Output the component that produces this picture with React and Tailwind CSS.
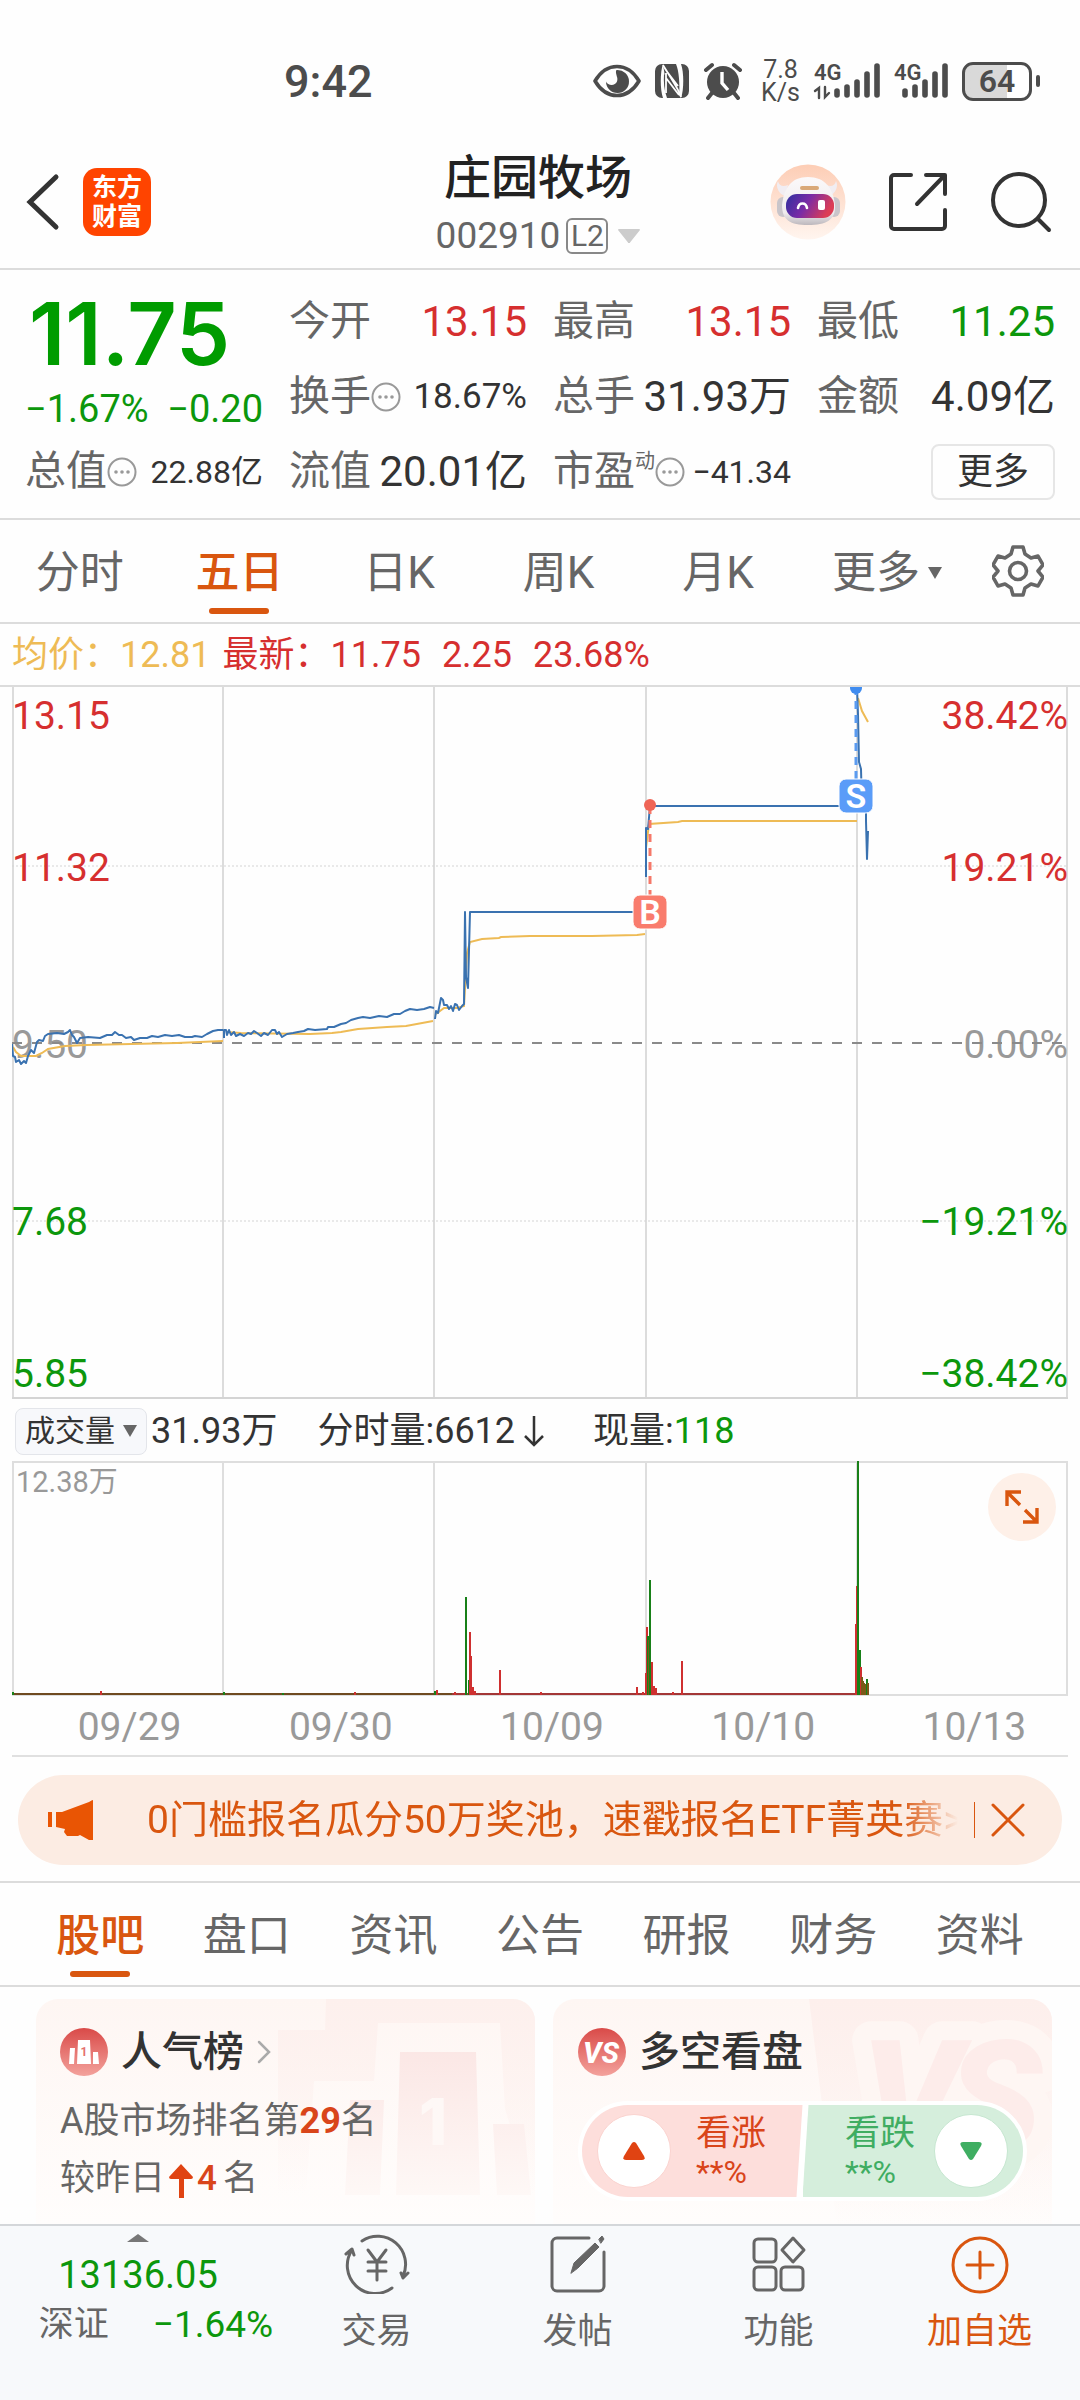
import { useState } from 'react'

const CHART_TABS = ['分时', '五日', '日K', '周K', '月K']
const SECTION_TABS = ['股吧', '盘口', '资讯', '公告', '研报', '财务', '资料']
const DATES = ['09/29', '09/30', '10/09', '10/10', '10/13']

const RED = '#d62f2f'
const GREEN = '#0c970c'

const PRICE_LABELS = [
  { y: 42, price: '13.15', change: '38.42%', color: RED },
  { y: 194, price: '11.32', change: '19.21%', color: RED },
  { y: 371, price: '9.50', change: '0.00%', color: '#999999' },
  { y: 548, price: '7.68', change: '−19.21%', color: GREEN },
  { y: 700, price: '5.85', change: '−38.42%', color: GREEN }
]

// one polyline per trading day
const PRICE_LINES = [
  '0,357 1,369 3,370 4,375 7,373 9,377 12,374 14,376 16,369 19,363 22,366 25,355 27,353 31,354 33,349 36,347 45,346 52,347 56,345 58,343 60,348 62,350 65,356 68,351 76,350 88,351 95,348 100,348 103,345 107,348 110,348 114,351 119,350 122,353 128,351 135,351 140,349 146,350 153,348 160,349 167,348 173,350 180,350 183,349 190,350 195,347 201,344 206,343 211,343',
  '212,351 212,343 214,343 215,348 217,343 219,348 222,345 224,349 228,347 232,349 236,346 239,347 242,344 245,346 249,349 252,346 256,348 260,343 263,343 265,347 267,345 270,350 275,347 281,346 286,345 292,344 296,342 303,343 315,342 316,340 322,340 329,337 334,336 339,333 346,331 351,330 358,331 367,329 375,330 382,327 388,327 393,324 398,322 405,323 412,322 418,320 422,321',
  '423,332 424,324 426,326 429,311 431,313 432,318 435,318 437,322 439,319 441,324 443,317 445,318 447,323 450,319 452,317 453,225 454,290 456,301 458,225 634,225',
  '634,190 634,141 636,142 638,119 845,119',
  '845,0 846,27 847,75 849,82 850,120 853,124 854,97 854,134 855,172 856,144'
]

const AVERAGE_LINES = [
  '1,360 4,365 9,369 24,369 30,366 36,362 53,359 74,358 119,357 165,356 211,354',
  '214,345 229,346 298,347 320,346 329,345 346,342 375,340 394,339 421,334',
  '424,327 432,321 445,321 452,319 455,266 458,255 470,252 487,251 489,250 518,249 580,249 625,248 633,247',
  '634,161 637,137 666,135 670,134 845,134',
  '846,11 850,24 856,35'
]

const VOLUME_BARS = [
  [0, 231, 'g'], [88, 230, 'r'], [211, 231, 'g'], [270, 232, 'g'], [342, 231, 'r'],
  [422, 230, 'g'], [424, 229, 'r'], [442, 231, 'r'],
  [453, 207, 'b'], [453, 136, 'g'], [456, 219, 'g'], [457, 171, 'r'], [458, 195, 'r'],
  [460, 226, 'r'], [462, 230, 'r'], [487, 209, 'r'], [528, 231, 'r'],
  [624, 226, 'r'], [630, 231, 'r'], [633, 212, 'r'], [634, 166, 'r'], [635, 175, 'g'],
  [636, 179, 'b'], [639, 201, 'r'], [637, 119, 'g'], [641, 225, 'r'], [643, 227, 'r'],
  [660, 231, 'r'], [669, 200, 'r'],
  [843, 163, 'r'], [844, 125, 'r'], [847, 189, 'g'], [848, 206, 'r'], [849, 216, 'b'], [850, 220, 'b'],
  [851, 222, 'b'], [852, 224, 'b'], [853, 223, 'b'], [854, 218, 'g'], [855, 222, 'b'], [845, 0, 'g']
]
const BAR_COLORS = { r: '#cf3030', g: '#188018', b: '#7a5a18' }

const VALUE_SIZES = { base: 'text-[42px]', sm: 'text-[35px]', xs: 'text-[32px]' }

function cx(...classes) {
  return classes.filter(Boolean).join(' ')
}

function Signal({ data }) {
  return (
    <svg
      width={data ? 66 : 54}
      height="38"
      viewBox={data ? '0 0 66 38' : '12 0 54 38'}
      fill="none"
      stroke="#4c4c4c"
      strokeLinecap="round"
      className="overflow-visible"
    >
      <text x={data ? 0 : 12} y="18" fontSize="22" fontWeight="600" fontFamily="Roboto, sans-serif" fill="#4c4c4c" stroke="none">4G</text>
      {data && <path d="M1 29l4-3v10M11 25v10l4-4" strokeWidth="2.4" />}
      <path d="M23 29v4M33 25v8M43 20v13M53 12v21M63 4v29" strokeWidth="5.6" />
    </svg>
  )
}

function StatusBar() {
  return (
    <div className="flex h-[135px] items-center justify-between pt-[27px] pr-10 pl-[284px] text-[#4c4c4c]">
      <span className="text-[45px] font-medium leading-none">9:42</span>
      <div className="flex items-center gap-3.5">
        <svg width="48" height="34" viewBox="0 0 48 34">
          <path d="M2 17C8 7 16 2.500 24 2.500S40 7 46 17C40 27 32 31.500 24 31.500S8 27 2 17z" fill="none" stroke="#4c4c4c" strokeWidth="3.600" strokeLinejoin="round" />
          <path d="M24 6a11.500 11.500 0 1 1-11 11.500c1.500 4 9 5 11 0 1.500-4-1.500-6-1-11z" fill="#4c4c4c" />
        </svg>
        <svg width="34" height="34" viewBox="0 0 34 34">
          <path d="M7 0h1C5 8 5 26 8 34H7a7 7 0 0 1-7-7V7a7 7 0 0 1 7-7zM27 0h-1c3 8 3 26 0 34h1a7 7 0 0 0 7-7V7a7 7 0 0 0-7-7z" fill="#4c4c4c" />
          <path d="M8 0h13c3 7 4 20 3 34L10 13zM26 34H12C9 26 8.500 18 9 10z" fill="#4c4c4c" />
          <path d="M8 1C10 5 25 27 26 33M11 9v20M11 14l13 17M13 9l10 13" fill="none" stroke="#fff" strokeWidth="1.800" />
        </svg>
        <svg width="40" height="38" viewBox="0 0 40 38">
          <circle cx="20" cy="20" r="16" fill="#4c4c4c" />
          <path d="M3 8l6-5M37 8l-6-5M9 31l-4 5M31 31l4 5" stroke="#4c4c4c" strokeWidth="4" strokeLinecap="round" />
          <path d="M19 10v11l6 7" fill="none" stroke="#fff" strokeWidth="3.400" />
        </svg>
        <span className="pl-1 text-center text-[25px] leading-[23px]">
          7.8
          <br />
          K/s
        </span>
        <Signal data />
        <Signal />
        <div className="flex items-center gap-1">
          <span className="flex h-[39px] w-[70px] items-center justify-center rounded-[11px] border-[3px] border-[#4c4c4c] bg-linear-to-r from-[#d9d9d9] from-66% to-white to-66% text-[32px] font-semibold leading-none">
            64
          </span>
          <span className="h-3 w-1 rounded-full bg-[#4c4c4c]" />
        </div>
      </div>
    </div>
  )
}

function Robot() {
  return (
    <svg width="76" height="76" viewBox="0 0 76 76">
      <defs>
        <linearGradient id="halo" x1="0" y1="0" x2="0" y2="1">
          <stop offset="0" stopColor="#fdcdb5" />
          <stop offset="1" stopColor="#fff5ef" />
        </linearGradient>
        <linearGradient id="shell" x1="0" y1="0" x2="0" y2="1">
          <stop offset="0" stopColor="#fbf9fa" />
          <stop offset=".75" stopColor="#efebed" />
          <stop offset="1" stopColor="#bdb8bd" />
        </linearGradient>
        <linearGradient id="visor" x1="0" y1="0" x2="1" y2="0.300">
          <stop offset="0" stopColor="#2e2f9f" />
          <stop offset=".5" stopColor="#7a2ba6" />
          <stop offset="1" stopColor="#dc3d55" />
        </linearGradient>
      </defs>
      <circle cx="38" cy="38" r="37.500" fill="url(#halo)" />
      <path d="M8 17c1 5 5 6 10 4l-3 11c-6-2-10-9-7-15zM66 17c-1 5-5 6-10 4l3 11c6-2 10-9 7-15z" fill="#f1edf2" />
      <rect x="7" y="33" width="12" height="20" rx="6" fill="#c9c5ca" />
      <rect x="58" y="33" width="12" height="20" rx="6" fill="#c9c5ca" />
      <path d="M38 13c17 0 25 11 27 28 1 15-9 20-27 20S12 56 12 41c2-17 9-28 26-28z" fill="url(#shell)" />
      <rect x="30" y="22" width="19" height="4" rx="2" fill="#d9a878" />
      <rect x="16" y="30" width="48" height="24" rx="11" fill="url(#visor)" />
      <path d="M28 44c1-6 8-6 9 0" fill="none" stroke="#fff" strokeWidth="2.600" strokeLinecap="round" />
      <rect x="48" y="36" width="7" height="10" rx="2" fill="#fff" />
    </svg>
  )
}

function Header() {
  return (
    <header className="grid h-[135px] grid-cols-[1fr_auto_1fr] items-center border-b-2 border-[#dcdcdc] pr-7 pl-6">
      <div className="flex items-center gap-[23px]">
        <button type="button" aria-label="返回">
          <svg width="36" height="58" viewBox="0 0 36 58" fill="none" stroke="#333" strokeWidth="5" strokeLinecap="round">
            <path d="M32 4L6 29l26 25" />
          </svg>
        </button>
        <a href="#home" className="flex size-[68px] items-center justify-center rounded-[14px] bg-[#ff4400] text-center text-[25px] font-bold leading-[29px] text-white">
          东方
          <br />
          财富
        </a>
      </div>
      <div className="flex flex-col items-center pt-2">
        <h1 className="text-[47px] font-medium leading-[60px] text-[#222]">庄园牧场</h1>
        <button type="button" className="flex items-center gap-1.5 text-[37px] leading-[56px] text-[#666]">
          002910
          <span className="flex h-9 w-[42px] items-center justify-center rounded-md border-2 border-[#888] text-[30px] leading-none">L2</span>
          <svg width="22" height="14" viewBox="0 0 22 14" className="ml-1">
            <path d="M1 0h20a1 1 0 0 1 1 1L12 13.500a1 1 0 0 1-2 0L0 1a1 1 0 0 1 1-1z" fill="#ccc" />
          </svg>
        </button>
      </div>
      <div className="flex items-center justify-end gap-[42px]">
        <button type="button" aria-label="助手">
          <Robot />
        </button>
        <button type="button" aria-label="分享">
          <svg width="60" height="60" viewBox="0 0 60 60" fill="none" stroke="#333" strokeWidth="4" strokeLinecap="round" strokeLinejoin="round">
            <path d="M23 3H6a3 3 0 0 0-3 3v48a3 3 0 0 0 3 3h48a3 3 0 0 0 3-3V38M38 3h19v19M56 4L29 32" />
          </svg>
        </button>
        <button type="button" aria-label="搜索">
          <svg width="62" height="62" viewBox="0 0 62 62" fill="none" stroke="#333" strokeWidth="4" strokeLinecap="round">
            <circle cx="29" cy="29" r="26" />
            <path d="M48 48l11 11" />
          </svg>
        </button>
      </div>
    </header>
  )
}

function Dots() {
  return (
    <svg width="30" height="30" viewBox="0 0 30 30" fill="#999" className="shrink-0">
      <circle cx="15" cy="15" r="13.500" fill="none" stroke="#999" strokeWidth="2" />
      <circle cx="9" cy="15" r="1.800" />
      <circle cx="15" cy="15" r="1.800" />
      <circle cx="21" cy="15" r="1.800" />
    </svg>
  )
}

function Quote({ label, value, sup, dots, size = 'base', tone = 'text-[#333]' }) {
  return (
    <div className="flex h-[75px] items-center justify-between whitespace-nowrap">
      <span className="flex items-center text-[41px] text-[#666]">
        {label}
        {sup && <span className="self-start text-[20px]">{sup}</span>}
        {dots && <Dots />}
      </span>
      <span className={cx(VALUE_SIZES[size], tone)}>{value}</span>
    </div>
  )
}

function QuotePanel() {
  return (
    <section className="grid grid-cols-4 gap-x-[26px] border-b-2 border-[#dcdcdc] px-[25px] pt-[14px] pb-[9px] leading-none">
      <div className="row-span-2 flex flex-col items-start gap-2 pt-[6px] text-[#009c00]">
        <span className="pl-1 font-[Inter] text-[86px] font-semibold leading-[88px]">11.75</span>
        <span className="flex w-full justify-between text-[38px] leading-[46px] text-[#0c970c]">
          <span>−1.67%</span>
          <span>−0.20</span>
        </span>
      </div>
      <Quote label="今开" value="13.15" tone="text-[#d62f2f]" />
      <Quote label="最高" value="13.15" tone="text-[#d62f2f]" />
      <Quote label="最低" value="11.25" tone="text-[#0c970c]" />
      <Quote label="换手" value="18.67%" dots size="sm" />
      <Quote label="总手" value="31.93万" />
      <Quote label="金额" value="4.09亿" />
      <Quote label="总值" value="22.88亿" dots size="xs" />
      <Quote label="流值" value="20.01亿" />
      <Quote label="市盈" value="−41.34" sup="动" dots size="xs" />
      <div className="flex items-center justify-end">
        <button type="button" className="h-14 w-[124px] rounded-lg border-2 border-[#e6e6e6] text-[36px] leading-none text-[#333]">
          更多
        </button>
      </div>
    </section>
  )
}

function Tab({ label, active, onSelect }) {
  return (
    <button
      type="button"
      role="tab"
      aria-selected={active}
      onClick={onSelect}
      className={cx('relative h-full flex-1 pt-1 text-[44px] leading-none', active ? 'font-medium text-[#d9560f]' : 'text-[#666]')}
    >
      {label}
      {active && <span className="absolute bottom-2 left-1/2 h-1.5 w-[60px] -translate-x-1/2 rounded-full bg-[#d9560f]" />}
    </button>
  )
}

function ChartTabs() {
  const [current, setCurrent] = useState('五日')

  return (
    <div className="flex h-[104px] items-center border-b-2 border-[#dcdcdc]">
      <div role="tablist" className="flex h-full flex-1">
        {CHART_TABS.map((tab) => (
          <Tab key={tab} label={tab} active={tab === current} onSelect={() => setCurrent(tab)} />
        ))}
      </div>
      <button type="button" className="flex w-[178px] items-center justify-center gap-2 pt-1 text-[44px] leading-none text-[#666]">
        更多
        <svg width="14" height="12" viewBox="0 0 14 12">
          <path d="M0 0h14L7 12z" fill="#666" />
        </svg>
      </button>
      <button type="button" aria-label="设置" className="flex w-[104px] justify-start pl-4">
        <svg width="52" height="52" viewBox="0 0 52 52" fill="none" stroke="#666" strokeWidth="3.600" strokeLinejoin="round">
          <path d="M21 2h10l2 7 6 4 7-2 5 9-5 6 5 6-5 9-7-2-6 4-2 7H21l-2-7-6-4-7 2-5-9 5-6-5-6 5-9 7 2 6-4z" />
          <circle cx="26" cy="26" r="8.500" />
        </svg>
      </button>
    </div>
  )
}

function Marker({ x, y, letter, color }) {
  return (
    <g>
      <rect x={x - 17} y={y - 17} width="34" height="34" rx="7" fill={color} stroke="#fff" strokeWidth="1" />
      <text x={x} y={y + 12} textAnchor="middle" fontSize="34" fontWeight="600" fill="#fff">{letter}</text>
    </g>
  )
}

function PriceChart() {
  return (
    <svg viewBox="0 0 1056 712" className="block h-auto w-full" fontFamily="Roboto, sans-serif">
      <path d="M1 0v712M211 0v712M422 0v712M634 0v712M845 0v712M1055 0v712" stroke="#dcdcdc" strokeWidth="2" />
      <path d="M0 179h1056M0 534h1056" stroke="#d4d4d4" strokeDasharray="2 2" />
      <path d="M0 711h1056" stroke="#d4d4d4" strokeWidth="2" />
      {PRICE_LABELS.map((row) => (
        <g key={row.price} fontSize="39" fill={row.color}>
          <text x="0" y={row.y}>{row.price}</text>
          <text x="1056" y={row.y} textAnchor="end">{row.change}</text>
        </g>
      ))}
      <path d="M0 356h1056" stroke="#8a8a8a" strokeWidth="2" strokeDasharray="10 10" />
      {AVERAGE_LINES.map((points) => (
        <polyline key={points} points={points} fill="none" stroke="#eebb55" strokeWidth="2" />
      ))}
      {PRICE_LINES.map((points) => (
        <polyline key={points} points={points} fill="none" stroke="#3a72b0" strokeWidth="2" strokeLinejoin="round" />
      ))}
      <path d="M638 119v90" stroke="#f57869" strokeWidth="3" strokeDasharray="8 6" />
      <path d="M844 0v93" stroke="#5b9bf0" strokeWidth="3" strokeDasharray="8 6" />
      <circle cx="638" cy="118" r="6" fill="#ef6556" />
      <circle cx="844" cy="1" r="6" fill="#3f8cf0" />
      <Marker x={638} y={225} letter="B" color="#f97c6d" />
      <Marker x={844} y={109} letter="S" color="#5a9cf8" />
    </svg>
  )
}

function VolumeChart() {
  return (
    <div className="relative">
      <svg viewBox="0 0 1056 235" className="block h-auto w-full">
        <path d="M0 1h1056M0 234h1056M1 0v234M211 0v234M422 0v234M634 0v234M845 0v234M1055 0v234" fill="none" stroke="#dedede" strokeWidth="2" />
        <text x="4" y="31" fontSize="29" fill="#999" fontFamily="Roboto, 'Noto Sans CJK SC', sans-serif">12.38万</text>
        <path d="M0 233h440" stroke="#6f4a20" strokeWidth="2" />
        <path d="M440 233h416" stroke="#a33636" strokeWidth="2" />
        {VOLUME_BARS.map(([x, y, tone], index) => (
          <rect key={index} x={x} y={y} width="2" height={234 - y} fill={BAR_COLORS[tone]} />
        ))}
      </svg>
      <button type="button" aria-label="全屏" className="absolute top-3 right-3 flex size-[68px] items-center justify-center rounded-full bg-[#fef0e8]">
        <svg width="34" height="34" viewBox="0 0 34 34" fill="none" stroke="#d9560f" strokeWidth="3.400">
          <path d="M16 2H2v14M2 2l13 13M32 18v14H18M32 32L20 20" />
        </svg>
      </button>
    </div>
  )
}

function ChartPanel() {
  return (
    <section className="px-3">
      <div className="-mx-3 flex h-[63px] items-center border-b-2 border-[#dcdcdc] px-3 text-[36px] leading-none text-[#d62f2f]">
        <span className="mr-3 flex items-center text-[#eebb55]">
          均价：<span>12.81</span>
        </span>
        <span>最新：</span>
        <span className="flex gap-[21px]">
          <span>11.75</span>
          <span>2.25</span>
          <span>23.68%</span>
        </span>
      </div>
      <PriceChart />
      <div className="flex h-[62px] items-center pt-0.5 text-[36px] leading-none text-[#333]">
        <button type="button" className="ml-[3px] mr-1 flex h-[47px] w-[132px] items-center justify-center gap-2 rounded-lg border border-[#e3e5ea] bg-[#f7f8fb] text-[30px]">
          成交量
          <svg width="14" height="12" viewBox="0 0 14 12">
            <path d="M0 0h14L7 12z" fill="#666" />
          </svg>
        </button>
        <span>31.93万</span>
        <span className="ml-10 flex items-center">
          分时量:6612
          <svg width="22" height="32" viewBox="0 0 22 32" fill="none" stroke="#333" strokeWidth="2.500" className="ml-2">
            <path d="M11 1v29M2 21l9 9 9-9" />
          </svg>
        </span>
        <span className="ml-[48px]">
          现量:<span className="text-[#0c970c]">118</span>
        </span>
      </div>
      <VolumeChart />
      <div className="border-b-2 border-[#e0e0e0]">
        <div className="-mr-3 ml-3 grid h-[59px] grid-cols-5 items-center pt-1 text-[39px] leading-none text-[#999]">
          {DATES.map((date) => (
            <span key={date} className="text-center">{date}</span>
          ))}
        </div>
      </div>
    </section>
  )
}

function Banner() {
  const [open, setOpen] = useState(true)
  if (!open) return null

  return (
    <div className="border-b-2 border-[#dcdcdc] px-[18px] pt-[18px] pb-4">
      <div className="flex h-[90px] items-center rounded-full bg-[#fcece3] pr-[37px] pl-[29px] text-[#d9560f]">
        <svg width="47" height="40" viewBox="0 0 47 40" fill="#e95504" className="mr-[53px] shrink-0">
          <path d="M1 12h4v15H1zM9 12h6L42 2q3-2 4-2v40h-4l-9-5-2 1H20l-3-4 1-3-9-2z" />
        </svg>
        <a
          href="#event"
          className="flex-1 overflow-hidden text-[39px] leading-[52px] whitespace-nowrap [mask-image:linear-gradient(to_right,black_93%,transparent)]"
        >
          0门槛报名瓜分50万奖池，速戳报名ETF菁英赛&gt;&gt;
        </a>
        <span className="mr-4 ml-4 h-9 w-px shrink-0 bg-[#d9560f]" />
        <button type="button" aria-label="关闭" onClick={() => setOpen(false)}>
          <svg width="34" height="34" viewBox="0 0 34 34" fill="none" stroke="#d9560f" strokeWidth="3" strokeLinecap="round">
            <path d="M2 2l30 30M32 2L2 32" />
          </svg>
        </button>
      </div>
    </div>
  )
}

function SectionTabs() {
  const [current, setCurrent] = useState('股吧')

  return (
    <div role="tablist" className="flex h-[104px] border-b-2 border-[#dcdcdc] px-[27px]">
      {SECTION_TABS.map((tab) => (
        <Tab key={tab} label={tab} active={tab === current} onSelect={() => setCurrent(tab)} />
      ))}
    </div>
  )
}

function BadgeGradient({ id }) {
  return (
    <linearGradient id={id} x1="0" y1="0" x2="0" y2="1">
      <stop offset="0" stopColor="#d94a48" />
      <stop offset="1" stopColor="#f3a29c" />
    </linearGradient>
  )
}

function RankCard() {
  return (
    <article className="relative overflow-hidden rounded-t-[22px] bg-linear-to-b from-[#fef6f3] to-[#fffdfc] px-6 pt-[26px]">
      <svg width="499" height="226" viewBox="0 0 499 226" className="absolute top-0 right-0">
        <defs>
          <linearGradient id="podiumBack" x1="0" y1="0" x2="0" y2="1">
            <stop offset="0" stopColor="#fdf0ed" />
            <stop offset="1" stopColor="#fdf0ed" stopOpacity="0" />
          </linearGradient>
          <linearGradient id="podium" x1="0" y1="0" x2="0" y2="1">
            <stop offset="0" stopColor="#fbe7e5" />
            <stop offset="1" stopColor="#fef8f6" />
          </linearGradient>
        </defs>
        <path d="M290 0h209v196h-4l-26-86-5-86H342l-4 58h-60l-8 114h-28V31h47z" fill="url(#podiumBack)" />
        <path d="M364 53h76l4 143h-84zM314 101h34l-4 95h-35zM457 125h31l7 71h-34z" fill="url(#podium)" />
        <text x="383" y="146" fontSize="64" fontWeight="800" fontFamily="Inter, sans-serif" fill="#fef8f6">1</text>
      </svg>
      <div className="relative">
        <a href="#rank" className="flex h-[54px] items-center gap-[13px] text-[41px] font-medium leading-none text-[#333]">
          <svg width="48" height="48" viewBox="0 0 48 48">
            <defs><BadgeGradient id="rankBadge" /></defs>
            <circle cx="24" cy="24" r="24" fill="url(#rankBadge)" />
            <path d="M18 12h12l1 24H17zM10 20h5l-1 16H9zM33 24h5l1 12h-6z" fill="#fff" />
            <text x="24" y="28" textAnchor="middle" fontSize="12" fontWeight="700" fontFamily="Roboto, sans-serif" fill="#e5706c">1</text>
          </svg>
          人气榜
          <svg width="14" height="24" viewBox="0 0 14 24" fill="none" stroke="#aaa" strokeWidth="2.500" strokeLinecap="round">
            <path d="M2 2l10 10L2 22" />
          </svg>
        </a>
        <p className="mt-[13px] text-[36px] leading-[58px] text-[#666]">
          A股市场排名第<b className="font-bold text-[#d9451a]">29</b>名
        </p>
        <p className="flex items-center text-[35px] leading-[58px] text-[#666]">
          较昨日
          <svg width="24" height="34" viewBox="0 0 24 34" className="mx-1 mt-1">
            <path d="M12 0l12 13q0 2-2 2h-7v19h-5V15H2q-2 0-2-2z" fill="#e04312" />
          </svg>
          <b className="mr-1.5 font-medium text-[#d9451a]">4</b>名
        </p>
      </div>
    </article>
  )
}

function VoteCard() {
  return (
    <article className="relative overflow-hidden rounded-t-[22px] bg-linear-to-b from-[#fef6f3] to-[#fffdfc] px-[25px] pt-[26px]">
      <svg width="499" height="226" viewBox="0 0 499 226" className="absolute top-0 right-0">
        <defs>
          <linearGradient id="versusBack" x1="0" y1="0" x2="0" y2="1">
            <stop offset="0" stopColor="#fdefec" />
            <stop offset="1" stopColor="#fdefec" stopOpacity="0" />
          </linearGradient>
        </defs>
        <path d="M256 0h243v226H284z" fill="url(#versusBack)" />
        <g fontSize="156" fontWeight="900" fontStyle="italic" fontFamily="Roboto, sans-serif" strokeLinejoin="round">
          <g fill="#fef6f3" stroke="#fef6f3" strokeWidth="38">
            <text x="308" y="152">V</text>
            <text x="394" y="152">S</text>
          </g>
          <g fill="#fdecea">
            <text x="308" y="152">V</text>
            <text x="394" y="152">S</text>
          </g>
        </g>
      </svg>
      <div className="relative">
        <h2 className="flex h-[54px] items-center gap-[13px] text-[41px] font-medium leading-none text-[#333]">
          <svg width="48" height="48" viewBox="0 0 48 48">
            <defs><BadgeGradient id="versusBadge" /></defs>
            <circle cx="24" cy="24" r="24" fill="url(#versusBadge)" />
            <text x="23" y="35" textAnchor="middle" fontSize="29" fontWeight="800" fontStyle="italic" fontFamily="Roboto, sans-serif" fill="#fff">VS</text>
          </svg>
          多空看盘
        </h2>
        <div className="mt-[22px] flex h-[100px] overflow-hidden rounded-full border-4 border-white bg-white leading-none">
          <button type="button" className="flex flex-1 items-center gap-[25px] bg-[#fddedb] pl-[15px] text-left text-[#d9451a] [clip-path:polygon(0_0,100%_0,calc(100%-6px)_100%,0_100%)]">
            <span className="flex size-[74px] items-center justify-center rounded-full border border-[#fad3cf] bg-white">
              <svg width="22" height="18" viewBox="0 0 22 18">
                <path d="M9 1q2-2 4 0l8 13q2 4-2 4H3q-4 0-2-4z" fill="#e04312" />
              </svg>
            </span>
            <span className="flex flex-col text-[35px] leading-[42px]">
              看涨
              <span className="text-[32px] leading-[34px]">**%</span>
            </span>
          </button>
          <button type="button" className="flex flex-1 items-center justify-end gap-[19px] bg-[#d5eedc] pr-[15px] text-left text-[#40ad62] [clip-path:polygon(6px_0,100%_0,100%_100%,0_100%)]">
            <span className="flex flex-col text-[35px] leading-[42px]">
              看跌
              <span className="text-[32px] leading-[34px]">**%</span>
            </span>
            <span className="flex size-[74px] items-center justify-center rounded-full border border-[#c6e6d0] bg-white">
              <svg width="22" height="18" viewBox="0 0 22 18">
                <path d="M9 17q2 2 4 0l8-13q2-4-2-4H3Q-1 0 1 4z" fill="#3fae62" />
              </svg>
            </span>
          </button>
        </div>
      </div>
    </article>
  )
}

function NavItem({ label, children, accent }) {
  return (
    <button type="button" className={cx('flex flex-1 flex-col items-center pt-2 text-[35px] leading-[48px]', accent ? 'text-[#d9560f]' : 'text-[#666]')}>
      <svg width="66" height="60" viewBox="0 0 66 60" fill="none" stroke="currentColor" strokeWidth="3" strokeLinecap="round" strokeLinejoin="round" className="mb-3.5">
        {children}
      </svg>
      {label}
    </button>
  )
}

function BottomNav() {
  return (
    <nav className="flex h-[176px] shrink-0 items-start border-t-2 border-[#d4d7da] bg-[#f7f9fb]">
      <button type="button" className="flex w-[276px] flex-col items-center pt-2 leading-none text-[#0c970c]">
        <svg width="22" height="8" viewBox="0 0 22 8">
          <path d="M11 0l11 8H0z" fill="#777" />
        </svg>
        <span className="mt-2 text-[38px] leading-[50px]">13136.05</span>
        <span className="flex items-center gap-[44px] pl-9 text-[37px] leading-[50px]">
          <span className="text-[35px] text-[#666]">深证</span>
          −1.64%
        </span>
      </button>
      <NavItem label="交易">
        <path d="M18 7A28 28 0 0 1 59 42M48 54A28 28 0 0 1 8 16M2 20l6-5 2 6M64 39l-5 5-2-5" />
        <path d="M24 16l9 12 9-12M33 28v18M24 28h18M24 37h18" />
      </NavItem>
      <NavItem label="发帖">
        <path d="M44 4H12a5 5 0 0 0-5 5v43a5 5 0 0 0 5 5h42a5 5 0 0 0 5-5V18" />
        <path d="M26 39l3-10L50 9l4 4-21 21zM54 5l3-3 2 3-3 4z" fill="currentColor" strokeWidth="1" />
      </NavItem>
      <NavItem label="功能">
        <rect x="8" y="5" width="22" height="23" rx="4" />
        <rect x="8" y="33" width="22" height="23" rx="4" />
        <rect x="35" y="33" width="22" height="23" rx="4" />
        <path d="M47 4l11 12-11 12-11-12z" />
      </NavItem>
      <NavItem label="加自选" accent>
        <circle cx="33" cy="31" r="27" />
        <path d="M33 18v26M20 31h26" />
      </NavItem>
    </nav>
  )
}

export default function App() {
  return (
    <div className="flex min-h-screen flex-col bg-[#fefefe] font-[Roboto,'Noto_Sans_CJK_SC',sans-serif]">
      <StatusBar />
      <Header />
      <QuotePanel />
      <ChartTabs />
      <ChartPanel />
      <Banner />
      <SectionTabs />
      <main className="grid flex-1 grid-cols-2 gap-[18px] pt-3 pr-7 pl-9">
        <RankCard />
        <VoteCard />
      </main>
      <BottomNav />
    </div>
  )
}
